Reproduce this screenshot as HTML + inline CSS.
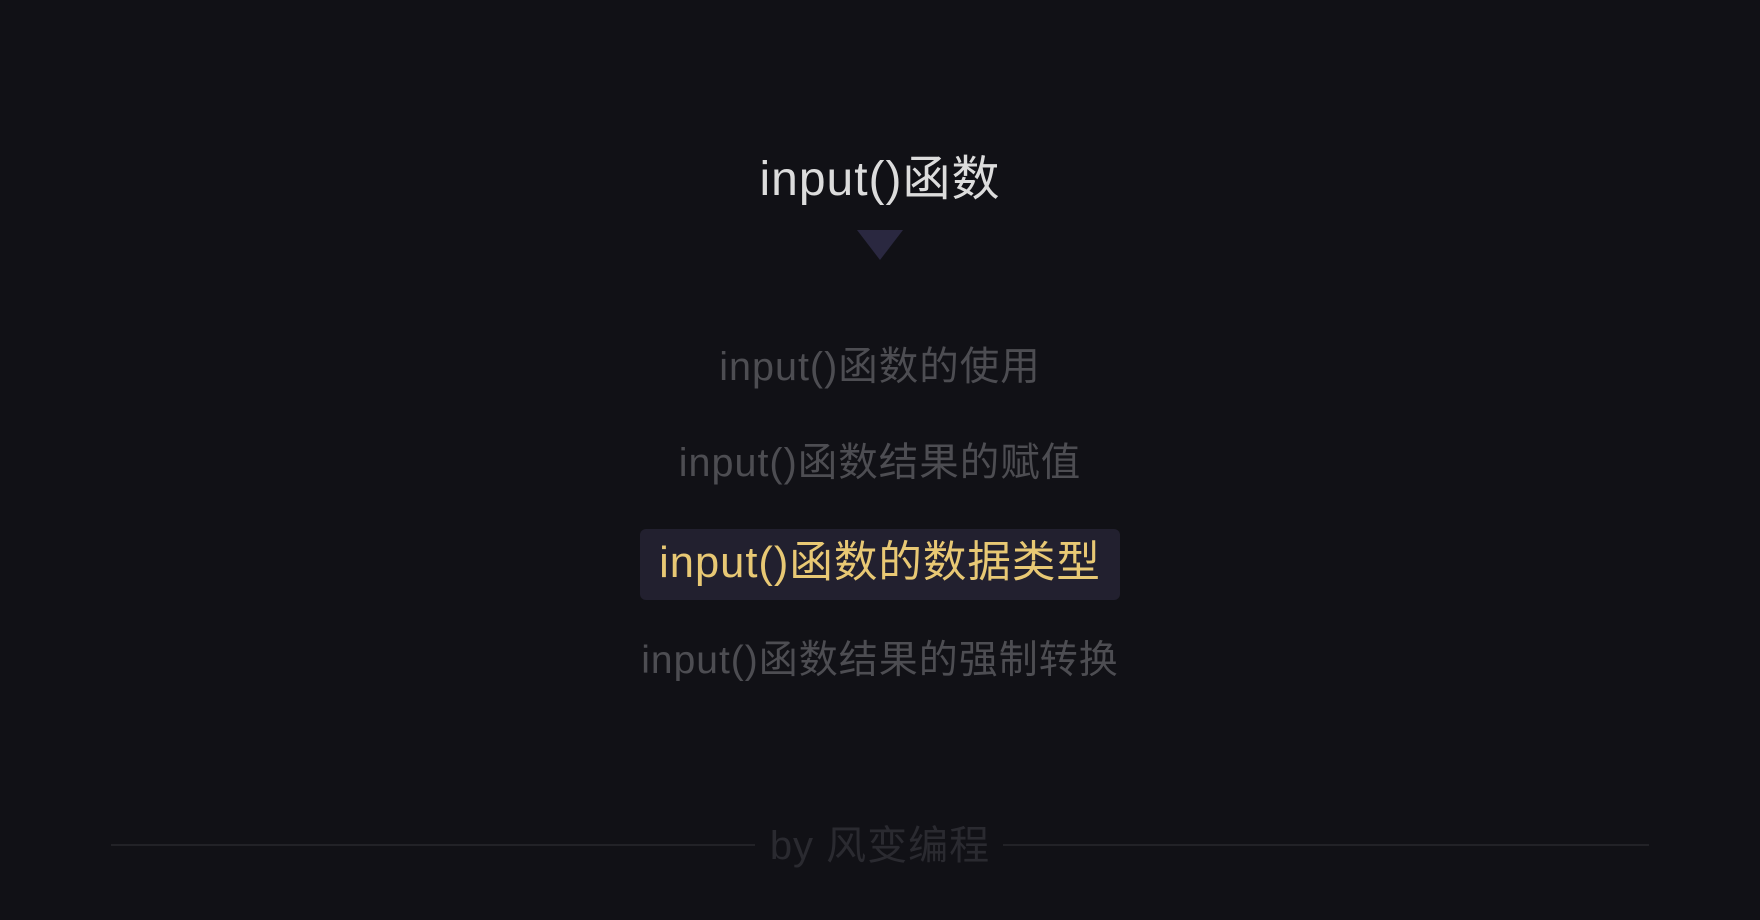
<!DOCTYPE html>
<html><head><meta charset="utf-8"><style>
html,body{margin:0;padding:0;}
body{width:1760px;height:920px;background:#111116;position:relative;overflow:hidden;font-family:"Liberation Sans","Noto Sans CJK SC",sans-serif;}
.t{position:absolute;left:0;width:1760px;text-align:center;white-space:nowrap;line-height:1;letter-spacing:1px;}
</style></head><body>
<div class="t" style="top:156px;font-size:48px;color:#dcdcdc;">input()函数</div>
<svg style="position:absolute;left:857px;top:230px" width="46" height="31"><path d="M0 0 H46 L23 30 Z" fill="#2a2840"/></svg>
<div class="t" style="top:348px;font-size:39.5px;color:#4d4d52;">input()函数的使用</div>
<div class="t" style="top:444px;font-size:39.5px;color:#4d4d52;">input()函数结果的赋值</div>
<div style="position:absolute;left:640px;top:529px;width:480px;height:71px;background:#22202f;border-radius:6px;"></div>
<div class="t" style="top:542px;font-size:43.5px;color:#e8c874;">input()函数的数据类型</div>
<div class="t" style="top:641px;font-size:39px;color:#4d4d52;">input()函数结果的强制转换</div>
<div style="position:absolute;left:111px;top:844px;width:644px;height:2px;background:#222227;"></div>
<div style="position:absolute;left:1003px;top:844px;width:646px;height:2px;background:#222227;"></div>
<div class="t" style="top:826px;font-size:40px;color:#2a2a30;">by 风变编程</div>
</body></html>
